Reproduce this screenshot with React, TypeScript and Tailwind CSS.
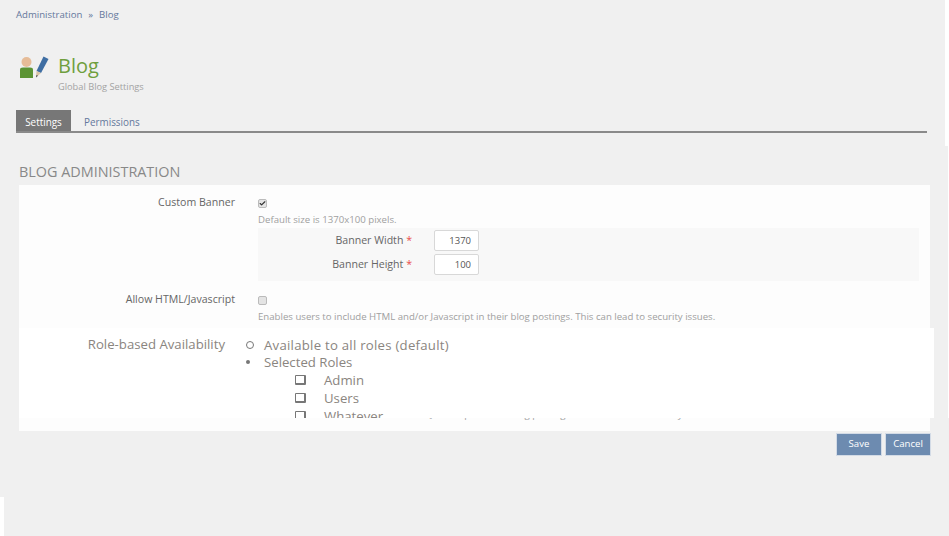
import { Check } from 'lucide-react';

const helpText = 'Enables users to include HTML and/or Javascript in their blog postings. This can lead to security issues.';

function BlogIcon() {
  return (
    <svg width="30" height="23" viewBox="0 0 30 23">
      <circle cx="7.5" cy="6" r="5" fill="#e6bc98" />
      <path d="M1 13.5 Q1 11.5 4 11.5 H11 Q14 11.5 14 13.5 V22 H1 Z" fill="#5c9434" />
      <path d="M24.5 0.5 L29.5 3 L22 17 L17.5 15 Z" fill="#3f6ea3" />
      <path d="M17.5 15 L22 17 L17 21.5 Z" fill="#d9c3a5" />
      <path d="M17.6 19 L18.8 19.8 L17 21.5 Z" fill="#22303f" />
    </svg>
  );
}

function Row({ label, help, checked }: { label: string; help: string; checked?: boolean }) {
  return (
    <div className="flex">
      <div className="w-[216px] text-right text-[#666] text-[10.6px] leading-[16px] pt-[9px]">{label}</div>
      <div className="ml-[23px] flex-1">
        <div className="h-[26px] flex items-end pb-[3px]">
          <span className="w-[9px] h-[9px] rounded-[2px] bg-[#e4e4e4] border border-[#bbb] flex items-center justify-center">
            {checked && <Check size={9} strokeWidth={4} className="text-[#333]" />}
          </span>
        </div>
        <div className="mt-[1.5px] text-[9.65px] leading-[14px] text-[#a0a0a0] whitespace-nowrap">{help}</div>
      </div>
    </div>
  );
}

function SizeField({ label, value }: { label: string; value: string }) {
  return (
    <div className="flex items-center h-[24.5px]">
      <div className="w-[154px] text-right text-[#666] text-[10.6px] pt-[1px]">
        {label} <span className="text-[#e94b4b]">*</span>
      </div>
      <input
        readOnly
        value={value}
        className="ml-[22px] w-[45px] h-[21px] border border-[#d8d8d8] bg-white rounded-[2px] text-right pr-[7px] text-[9.5px] text-[#555] outline-none"
      />
    </div>
  );
}

function RoleItem({ label }: { label: string }) {
  return (
    <div className="flex items-center h-[18px] pl-[49px]">
      <span className="w-[11px] h-[10px] border border-[#777] border-r-2 border-b-2 rounded-[1px]" />
      <span className="ml-[18px]">{label}</span>
    </div>
  );
}

export default function App() {
  return (
    <div className="relative w-[949px] h-[536px] overflow-hidden bg-[#f0f0f0] font-['Open_Sans',sans-serif]">
      <div className="w-[911px] ml-[16px]">
        <div className="h-[30px] flex items-center text-[9.6px] text-[#64779c]">
          Administration <span className="mx-[6px]">»</span> Blog
        </div>
        <div className="flex mt-[26px] ml-[3px] h-[54px]">
          <div>
            <BlogIcon />
          </div>
          <div className="ml-[9px] -mt-[1px]">
            <div className="text-[20px] leading-[22px] text-[#6f9f3e]">Blog</div>
            <div className="text-[9.25px] leading-[20px] text-[#a3a3a3]">Global Blog Settings</div>
          </div>
        </div>
        <div className="flex h-[23px] border-b-2 border-[#8a8a8a] text-[9.9px]">
          <div className="w-[55px] h-[21px] pt-[3px] flex items-center justify-center bg-[#777] text-white">Settings</div>
          <div className="ml-[13px] h-[21px] pt-[3px] flex items-center text-[#64779c]">Permissions</div>
        </div>
      </div>

      <div className="ml-[19px] w-[911px]">
        <h2 className="mt-[28px] h-[24px] text-[14.4px] leading-[22px] uppercase text-[#888]">Blog Administration</h2>
        <div className="h-[246px] bg-[#fdfdfd]">
          <Row label="Custom Banner" help="Default size is 1370x100 pixels." checked />
          <div className="ml-[239px] mt-[1.5px] w-[661px] h-[53px] bg-[#f8f8f8]">
            <SizeField label="Banner Width" value="1370" />
            <SizeField label="Banner Height" value="100" />
          </div>
          <div className="mt-[1px]">
            <Row label="Allow HTML/Javascript" help={helpText} />
          </div>
          <div className="ml-[239px] mt-[84.5px] text-[9.65px] leading-[14px] text-[#a0a0a0] whitespace-nowrap">{helpText}</div>
        </div>
        <div className="flex justify-end gap-[3px] mt-[2px] -mr-[1px]">
          <button className="w-[46px] h-[23px] bg-[#6d8bb0] border border-[#d3dbe6] text-[9.6px] text-white">Save</button>
          <button className="w-[46px] h-[23px] bg-[#6d8bb0] border border-[#d3dbe6] text-[9.6px] text-white">Cancel</button>
        </div>
      </div>

      {/* pasted mockup patch, sits over the form */}
      <div className="absolute left-[19px] top-[328px] w-[915px] h-[90px] overflow-hidden bg-white flex text-[13.2px] text-[#8a8580]">
        <div className="w-[206px] text-right pt-[6px] leading-[20px]">Role-based Availability</div>
        <div className="ml-[21px] pt-[8px] leading-[18px]">
          <div className="flex items-center h-[17px]">
            <span className="w-[8px] h-[8px] border border-[#777] rounded-full" />
            <span className="ml-[10px] tracking-[0.25px]">Available to all roles (default)</span>
          </div>
          <div className="flex items-center h-[18px]">
            <span className="w-[4px] h-[4px] bg-[#777] rounded-full" />
            <span className="ml-[14px]">Selected Roles</span>
          </div>
          <RoleItem label="Admin" />
          <RoleItem label="Users" />
          <RoleItem label="Whatever" />
        </div>
      </div>

      <div className="absolute right-0 top-0 w-[4px] h-[146px] bg-white" />
      <div className="absolute right-0 top-[146px] w-[1px] h-[272px] bg-white" />
      <div className="absolute left-0 top-[497px] w-[4px] h-[39px] bg-white" />
    </div>
  );
}
